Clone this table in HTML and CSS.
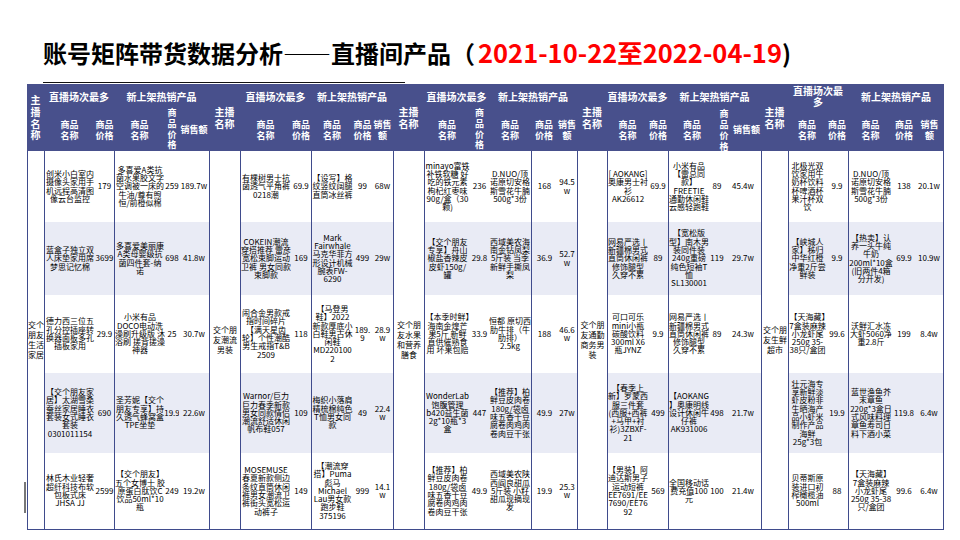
FILE: index.html
```html
<!DOCTYPE html>
<html lang="zh-CN">
<head>
<meta charset="utf-8">
<title>账号矩阵带货数据分析——直播间产品</title>
<link rel="stylesheet" href="styles.css">
</head>
<body>
<div class="slide">
  <div class="title">账号矩阵带货数据分析——直播间产品（<span class="red">2021-10-22至2022-04-19</span>)</div>
  <div class="rule"></div>
  <div class="tbl">
    <div class="thead">
      <div class="hh hh1"><span class="w1">主播名称</span></div>
      <div class="hh hh2"><span class="w2">主播名称</span></div>
      <div class="hh hh3"><span class="w2">主播名称</span></div>
      <div class="hh hh4"><span class="w2">主播名称</span></div>
      <div class="hh hh5"><span class="w2">主播名称</span></div>

      <div class="grp g2">直播场次最多</div>
      <div class="grp g3">新上架热销产品</div>
      <div class="grp g2">直播场次最多</div>
      <div class="grp g3">新上架热销产品</div>
      <div class="grp g2">直播场次最多</div>
      <div class="grp g3">新上架热销产品</div>
      <div class="grp g2">直播场次最多</div>
      <div class="grp g3">新上架热销产品</div>
      <div class="grp g2"><span class="w5">直播场次最多</span></div>
      <div class="grp g3">新上架热销产品</div>

      <div class="sub"><span class="w2">商品名称</span></div>
      <div class="sub"><span class="w2">商品价格</span></div>
      <div class="sub"><span class="w2">商品名称</span></div>
      <div class="sub vsub"><span class="w1">商品价格</span></div>
      <div class="sub">销售额</div>

      <div class="sub"><span class="w2">商品名称</span></div>
      <div class="sub"><span class="w2">商品价格</span></div>
      <div class="sub"><span class="w2">商品名称</span></div>
      <div class="sub"><span class="w2">商品价格</span></div>
      <div class="sub"><span class="w2">销售额</span></div>

      <div class="sub"><span class="w2">商品名称</span></div>
      <div class="sub vsub"><span class="w1">商品价格</span></div>
      <div class="sub"><span class="w2">商品名称</span></div>
      <div class="sub"><span class="w2">商品价格</span></div>
      <div class="sub"><span class="w2">销售额</span></div>

      <div class="sub"><span class="w2">商品名称</span></div>
      <div class="sub"><span class="w2">商品价格</span></div>
      <div class="sub"><span class="w2">商品名称</span></div>
      <div class="sub"><span class="w2">商品价格</span></div>
      <div class="sub">销售额</div>

      <div class="sub"><span class="w2">商品名称</span></div>
      <div class="sub"><span class="w2">商品价格</span></div>
      <div class="sub"><span class="w2">商品名称</span></div>
      <div class="sub"><span class="w2">商品价格</span></div>
      <div class="sub"><span class="w2">销售额</span></div>
    </div>

    <div class="tbody">
      <div class="host hc1"><span class="b2">交个朋友生活家居</span></div>
      <div class="host hc2 l"><span class="b3">交个朋友潮流男装</span></div>
      <div class="host hc3 l"><span class="b3">交个朋友水果和营养膳食</span></div>
      <div class="host hc4 l"><span class="b3">交个朋友通勤商务男装</span></div>
      <div class="host hc5 l"><span class="b3">交个朋友生鲜超市</span></div>

      <!-- row 1 -->
      <div class="c l">创米小白室内摄像头家用手机远程高清图像云台监控</div>
      <div class="c n">179</div>
      <div class="c l">多喜爱A类抗菌水果胶文字空调被一床的牛油/尊有煦恒/前橙似棉</div>
      <div class="c n">259</div>
      <div class="c n">189.7w</div>

      <div class="c l">有棵树男士抗菌透气平角裤0218潮</div>
      <div class="c n">69.9</div>
      <div class="c l">【设写】格纹竖纹阔腿直筒冰丝裤</div>
      <div class="c n">99</div>
      <div class="c n">68w</div>

      <div class="c l">minayo富铁补铁软糖 好吃的铁元素枸杞红枣味90g/盒（30颗)</div>
      <div class="c n">236</div>
      <div class="c">D.NUO/顶诺原切安格斯雪花牛腩500g*3份</div>
      <div class="c n l">168</div>
      <div class="c wr">94.5w</div>

      <div class="c l">[ AOKANG]奥康男士衬衫 AK26612</div>
      <div class="c n">69.9</div>
      <div class="c l">小米有品【雷总同款】FREETIE 通勤休闲鞋 云感轻跑鞋</div>
      <div class="c n">89</div>
      <div class="c n">45.4w</div>

      <div class="c l">北极光双饮家用牛奶杯饮料杯啤酒杯果汁杯双饮</div>
      <div class="c n">9.9</div>
      <div class="c l">D.NUO/顶诺原切安格斯雪花牛腩500g*3份</div>
      <div class="c n">138</div>
      <div class="c n">20.1w</div>

      <!-- row 2 -->
      <div class="c s l">蓝盒子独立双人床垫家用席梦思记忆棉</div>
      <div class="c s n">3699</div>
      <div class="c s l">多喜爱美丽康A类母婴级抗菌四件套-纳诺</div>
      <div class="c s n">698</div>
      <div class="c s n">41.8w</div>

      <div class="c s l">COKEIN潮流穿搭推荐 雷彦宽松束脚运动卫裤 男女同款束脚款</div>
      <div class="c s n">169</div>
      <div class="c s l">Mark Fairwhale马克华菲方形设计机械腕表FW-6290</div>
      <div class="c s n">499</div>
      <div class="c s n">29w</div>

      <div class="c s l">【交个朋友专享】舟山椒盐香辣皮皮虾150g/罐</div>
      <div class="c s n">29.8</div>
      <div class="c s">西域美农海南金钻凤梨5斤装 当季新鲜手撕凤梨</div>
      <div class="c s n l">36.9</div>
      <div class="c s wr">52.7w</div>

      <div class="c s l">网易严选丨新疆棉男式直筒休闲裤 修饰腿型 久穿不累</div>
      <div class="c s n">89</div>
      <div class="c s l">【宽松版型】南木男装同件装240g重磅纯色短袖T恤SL130001</div>
      <div class="c s n">119</div>
      <div class="c s n">29.7w</div>

      <div class="c s l">【峡城人家】秭归中华红橙净重2斤尝鲜装</div>
      <div class="c s n">9.9</div>
      <div class="c s l">【热卖】认养一头牛纯牛奶200ml*10盒(旧两件4箱分开发)</div>
      <div class="c s n">69.9</div>
      <div class="c s n">10.9w</div>

      <!-- row 3 -->
      <div class="c l">德力西三位五孔分控插座转换器面板多孔插板家用</div>
      <div class="c n">29.9</div>
      <div class="c l">小米有品DOCO电动洗澡刷升级版 沐浴刷 搓背搓澡神器</div>
      <div class="c n">25</div>
      <div class="c n">30.7w</div>

      <div class="c l">闹合金男款戒指时间碎片【满天星齿轮】个性潮酷男生戒指T&amp;B 2509</div>
      <div class="c n">118</div>
      <div class="c l">【马登男鞋】2022新款厚底小白鞋男古休闲鞋MD2201002</div>
      <div class="c wr">189.9</div>
      <div class="c wr">28.9w</div>

      <div class="c l">【本季时鲜】海南金煌芒果5斤 新鲜直供催熟食用 坏果包赔</div>
      <div class="c n">33.9</div>
      <div class="c">恒都 原切西肋牛排（牛肋排）2.5kg</div>
      <div class="c n l">188</div>
      <div class="c wr">46.6w</div>

      <div class="c l">可口可乐mini小瓶碳酸饮料300ml X6瓶JYNZ</div>
      <div class="c n">9.9</div>
      <div class="c l">网易严选丨新疆棉男式直筒休闲裤 修饰腿型 久穿不累</div>
      <div class="c n">89</div>
      <div class="c n">24.3w</div>

      <div class="c l">【天海藏】7盒装麻辣小龙虾尾250g 35-38只/盒团</div>
      <div class="c n">99.6</div>
      <div class="c l">沃鲜汇水冻大虾5060净重2.8斤</div>
      <div class="c n">199</div>
      <div class="c n">8.4w</div>

      <!-- row 4 -->
      <div class="c s l">【交个朋友家居】太湖雪桑蚕丝家居睡衣套装女式睡衣套装0301011154</div>
      <div class="c s n">690</div>
      <div class="c s l">圣芳妮【交个朋友专享】持久透气蜂窝盒TPE坐垫</div>
      <div class="c s n">19.9</div>
      <div class="c s n">22.6w</div>

      <div class="c s l">Warnor/巨力巨力春季新款男女同款情侣潮流舒适休闲帆布鞋057</div>
      <div class="c s n">109</div>
      <div class="c s l">梅织小落肩精梳棉纯色T恤男女同款</div>
      <div class="c s n">49</div>
      <div class="c s wr">22.4w</div>

      <div class="c s l">WonderLab饱腹管理b420益生菌2g*10瓶*3盒</div>
      <div class="c s n">447</div>
      <div class="c s">【推荐】柏鲜豆皮肉卷180g/袋卤味五香干豆腐卷肉鸡肉卷肉豆干张</div>
      <div class="c s n l">49.9</div>
      <div class="c s n">27w</div>

      <div class="c s l">【春季上新】罗蒙西服三件套(西服+西裤+马甲+衬衫)3ZBXF-21</div>
      <div class="c s n">499</div>
      <div class="c s l">【AOKANG】奥康明线设计休闲牛仔裤 AK931006</div>
      <div class="c s n">498</div>
      <div class="c s n">21.7w</div>

      <div class="c s l">壮元海专享新鲜淡虾皮粉非生晒海产品小虾米制作产品海鲜25g*3包</div>
      <div class="c s n">19.9</div>
      <div class="c s l">蓝世渔鱼芥末章鱼220g*3盒日式风味料理章鱼寿司日料下酒小菜</div>
      <div class="c s n">119.8</div>
      <div class="c s n">6.4w</div>

      <!-- row 5 -->
      <div class="c l">林氏木业轻奢超纤科技布软包板式床 JHSA JJ</div>
      <div class="c n">2599</div>
      <div class="c l">【交个朋友】五个女博士 胶原蛋白肽饮C饮品50ml*10瓶</div>
      <div class="c n">249</div>
      <div class="c n">19.2w</div>

      <div class="c l">MOSEMUSE春夏新款侧边条纹直筒休闲裤男女潮流卫裤街头宽松运动裤子</div>
      <div class="c n">149</div>
      <div class="c l">【潮流穿搭】Puma彪马Michael Lau男女款跑步鞋375196</div>
      <div class="c n">999</div>
      <div class="c wr">14.1w</div>

      <div class="c l">【推荐】柏鲜豆皮肉卷180g/袋卤味五香干豆腐卷肉鸡肉卷肉豆干张</div>
      <div class="c n">49.9</div>
      <div class="c">西域美农陕西阎良甜瓜5斤装 小籽甜瓜现摘现发</div>
      <div class="c n l">19.9</div>
      <div class="c wr">25.3w</div>

      <div class="c l">【男装】阿迪达斯男子运动短裤EE7691/EE7690/EE7692</div>
      <div class="c n">569</div>
      <div class="c l">全国移动话费充值100元</div>
      <div class="c n">100</div>
      <div class="c n">21.4w</div>

      <div class="c l">贝蒂斯原装进口初榨橄榄油500ml</div>
      <div class="c n">88</div>
      <div class="c l">【天海藏】7盒装麻辣小龙虾尾250g 35-38只/盒团</div>
      <div class="c n">99.6</div>
      <div class="c n">6.4w</div>
    </div>
  </div>
  <div class="mark"></div>
</div>
</body>
</html>
```

FILE: styles.css
```css
html, body {
  margin: 0;
  padding: 0;
  background: #ffffff;
}

body {
  font-family: "Noto Sans CJK SC", "Noto Sans", sans-serif;
  color: #000;
}

.slide {
  position: relative;
  width: 960px;
  height: 540px;
  overflow: hidden;
  box-sizing: border-box;
  padding-top: 40px;
}

.title {
  margin-left: 43px;
  height: 24px;
  font-size: 24px;
  line-height: 24px;
  font-weight: 700;
  white-space: nowrap;
}

.red {
  color: #ff0000;
  font-size: 25.5px;
  margin-left: 3px;
}

.rule {
  margin: 18px 0 0 43px;
  width: 362px;
  height: 1px;
  background: #111;
}

.tbl {
  margin: 1px 0 0 27px;
  width: 917px;
}

.thead {
  display: grid;
  grid-template-columns:
    17px 51px 19px 51px 14px 30px
    31px 51px 20px 42px 19px 21px
    31px 46px 19px 42px 26px 20px
    30px 41px 20px 48px 16px 29px
    27px 38px 22px 45px 22px 29px;
  grid-template-rows: 24px 43px;
  background: #48508c;
  color: #ffffff;
  font-weight: 700;
}

.thead > div {
  display: flex;
  align-items: center;
  justify-content: center;
  text-align: center;
  white-space: nowrap;
}

.thead span {
  display: block;
  white-space: normal;
}

.w1 { width: 1em; }
.w2 { width: 2em; }
.w5 { width: 5em; }

.hh {
  grid-row: 1 / span 2;
  font-size: 10px;
  line-height: 12px;
}

.hh1 { grid-column: 1; line-height: 11.7px; }
.hh2 { grid-column: 7; }
.hh3 { grid-column: 13; }
.hh4 { grid-column: 19; }
.hh5 { grid-column: 25; }

.grp {
  font-size: 10px;
  line-height: 11px;
}

.g2 { grid-column: span 2; }
.g3 { grid-column: span 3; }

.sub {
  font-size: 9px;
  line-height: 11px;
}

.vsub {
  line-height: 10.7px;
}

.tbody {
  display: grid;
  grid-template-columns:
    16px 51px 19px 51px 14px 30px
    31px 51px 20px 42px 19px 21px
    31px 46px 19px 42px 26px 20px
    30px 41px 20px 41px 16px 36px
    27px 38px 22px 45px 22px 28px;
  grid-template-rows: 71px 73px 78px 80px 76px;
  border: 1px solid #3f4b8c;
  border-top: none;
  font-size: 8px;
  line-height: 8.33px;
}

.tbody > div {
  display: flex;
  align-items: center;
  justify-content: center;
  text-align: center;
  box-sizing: border-box;
  min-width: 0;
  background: #ffffff;
}

.host {
  grid-row: 1 / span 5;
  line-height: 10px;
}

.host span {
  display: block;
}

.b2 { width: 2em; }
.b3 { width: 3em; }

.hc1 { grid-column: 1; }
.hc2 { grid-column: 7; }
.hc3 { grid-column: 13; }
.hc4 { grid-column: 19; }
.hc5 { grid-column: 25; }

.c {
  padding: 0;
  overflow-wrap: anywhere;
}

.n {
  white-space: nowrap;
}

.wr {
  padding: 0 1px;
  word-break: break-all;
}

.tbody > .s {
  background: #e9ebf5;
}

.l {
  border-left: 1px solid #3f4b8c;
}

.mark {
  position: absolute;
  left: 24px;
  top: 482px;
  width: 2px;
  height: 31px;
  background: #777;
}
```
